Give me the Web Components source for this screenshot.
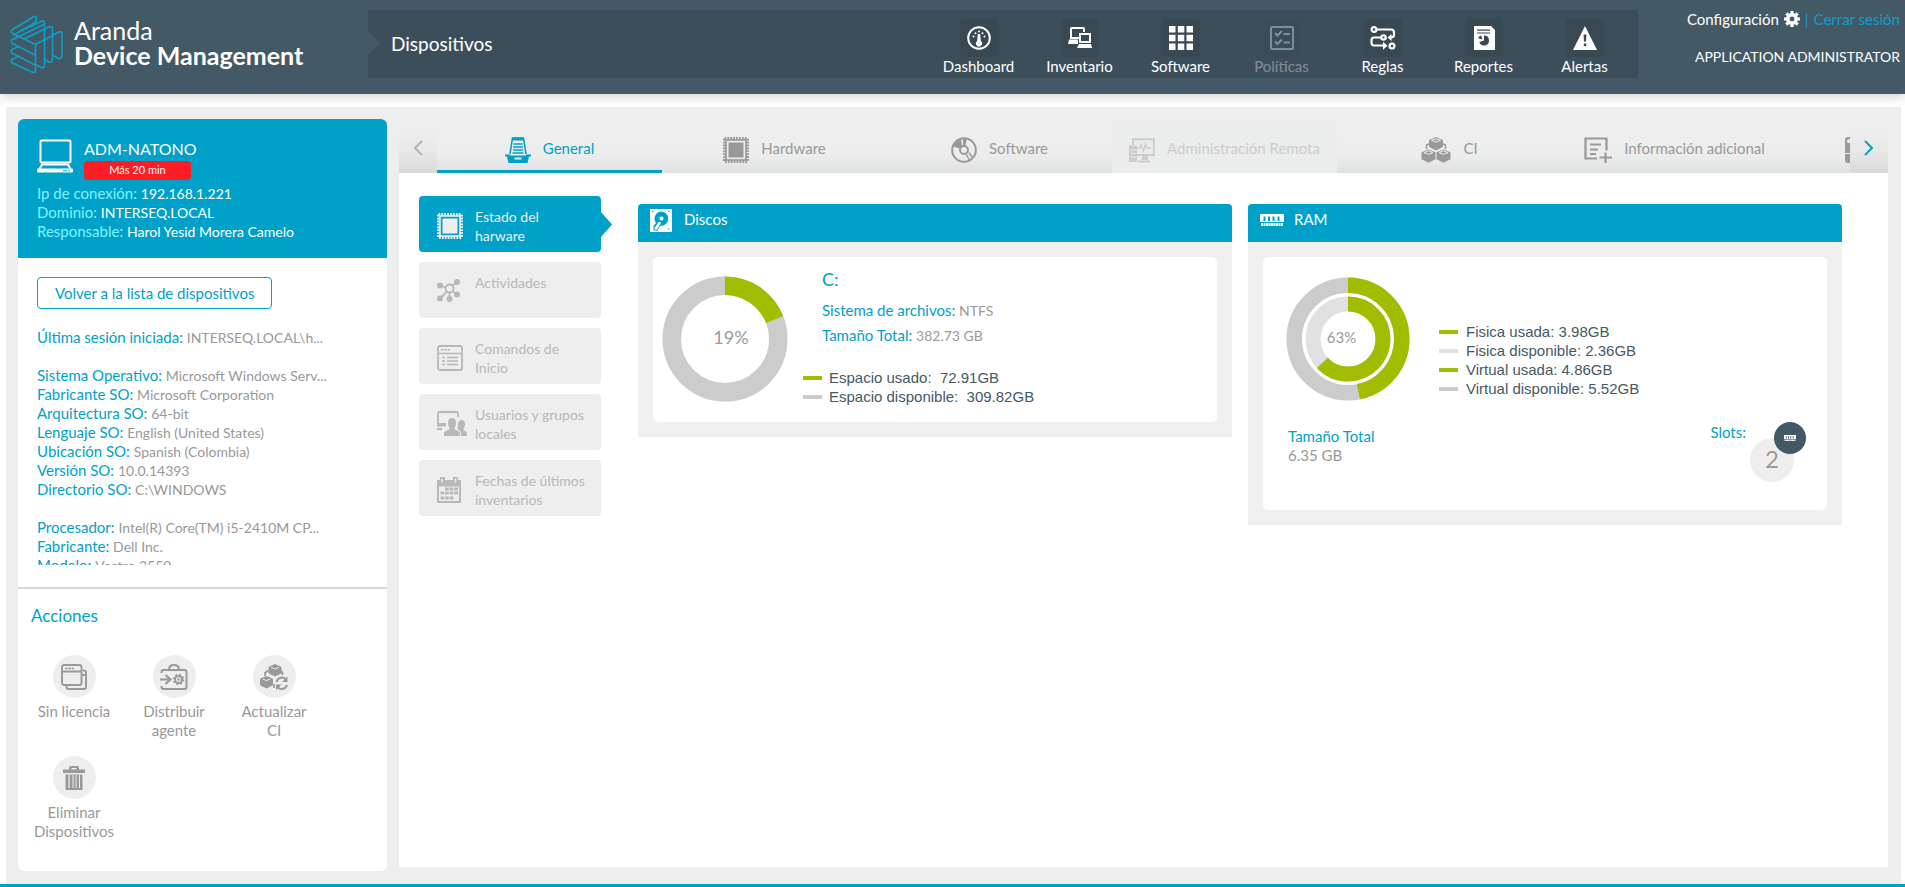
<!DOCTYPE html>
<html lang="es">
<head>
<meta charset="utf-8">
<meta name="viewport" content="width=device-width, initial-scale=1">
<title>Aranda Device Management</title>
<style>
  :root {
    --brand: #00a1c9;
    --slate: #435a66;
    --muted: #999;
    --surface: #eee;
    --line: 19px;
  }
  body { margin: 0; background: #fff; color: var(--muted); font: 15px/19px Lato, "Noto Sans", sans-serif; }
</style>
</head>
<body>
<device-app></device-app>

<script>
const ICONS = {
  logo: [54, 60, `<g fill="none" stroke="#0d9fc8" stroke-width="1.600" stroke-linejoin="round">
    <path d="M2 15 24 1.500Q26.500 .5 26.500 3L26 7 3 20.500"/>
    <path d="M2 15Q0 17 3 18.500L25.500 29.500"/>
    <path d="M9 21 2 24.500Q0 26.500 2.500 28.500L25 40"/>
    <path d="M12 15.500 32 6Q34.500 5.500 34.500 8V50.500Q34 54 31 52.500L26 50"/>
    <path d="M3 24.500 34.500 9M14 24 40 11.500Q42.500 11 42.500 14V44Q42 48 39 47L34.500 44.500"/>
    <path d="M25.500 29.500 49 17Q52 16 52 19V41Q51 44.500 48.500 43.500L42.500 40"/>
    <path d="M9 31 2 34.500Q0 36.500 2.500 38.500L25 50"/>
    <path d="M9 41 2 44.500Q0 46.500 2.500 48L23 57.500Q25.500 58 25.500 55V29.500"/></g>`],
  laptop: [36, 34, `<g fill="none" stroke="currentColor" stroke-width="2"><rect x="3.500" y="1.500" width="30" height="22" rx="1"/><path d="M5 25.500H31L34 31H2Z" stroke-linejoin="round"/></g><rect x="0" y="29.500" width="36" height="4" rx="1" fill="currentColor"/><path d="M26 31.800h4M31 31.800h2" stroke="var(--brand)" stroke-width="1"/>`],
  gauge: [24, 24, `<circle cx="12" cy="12" r="10.800" fill="none" stroke="currentColor" stroke-width="2"/><path d="M10.800 8h2.400l.6 7a3 3 0 1 1-3.600 0z" fill="currentColor"/><g fill="currentColor"><circle cx="6.500" cy="10.500" r="1"/><circle cx="8.500" cy="7.200" r="1"/><circle cx="12" cy="5.500" r="1"/><circle cx="15.500" cy="7.200" r="1"/><circle cx="17.500" cy="10.500" r="1"/></g>`],
  computers: [24, 24, `<g fill="none" stroke="currentColor" stroke-width="2"><path d="M11 12H3V2.500q0-.5.5-.5h12q.5 0 .5.500V6"/><rect x="12" y="8" width="10" height="8"/></g><path d="M1 13.500h9V18H0zM11 18h12l1 4H9z" fill="currentColor"/>`],
  grid: [24, 24, `<path d="M0 0h6.500v6.500H0zM8.800 0h6.500v6.500H8.800zM17.500 0H24v6.500h-6.500zM0 8.800h6.500v6.500H0zM8.800 8.800h6.500v6.500H8.800zM17.500 8.800H24v6.500h-6.500zM0 17.500h6.500V24H0zM8.800 17.500h6.500V24H8.800zM17.500 17.500H24V24h-6.500z" fill="currentColor"/>`],
  checklist: [24, 24, `<g fill="none" stroke="currentColor"><rect x="1" y="1" width="22" height="22" rx="1" stroke-width="2"/><path d="M5 7l2.500 2.500L12 5M5 15.500 7.500 18l4.500-4.500" stroke-width="2.200"/><path d="M13.500 8H20M13.500 16.500H20" stroke-width="1.800"/></g>`],
  rules: [26, 24, `<g fill="none" stroke="currentColor" stroke-width="2.200"><circle cx="4" cy="3.500" r="2.400"/><path d="M6.500 3.500H21q3 0 3 3V9q0 2.500-3 2.500h-2"/><circle cx="13.500" cy="11.500" r="2.200"/><path d="M11 11.500H4q-2.500 0-2.500 3v2q0 3 2.500 3h9"/><circle cx="22" cy="20" r="2.400"/></g><path d="M17.500 11.500l4-3.500v7zM17.500 19.800l-4.500-4v8z" fill="currentColor"/>`],
  report: [22, 24, `<path d="M1 0h17l4 4v20H1z" fill="currentColor"/><path d="M4 4.200h13M4 7h13" stroke="#384954" stroke-width="1.200"/><path d="M11 14.500V9.500a5 5 0 1 1-4.700 6.600z" fill="#384954"/><path d="M9.500 13.500 5 12.200A5 5 0 0 1 8 9.600z" fill="#384954"/>`],
  alert: [24, 24, `<path d="M12 0 24 24H0z" fill="currentColor"/><path d="M10.600 8.500h2.800l-.4 7h-2zM10.800 17.500h2.400V20h-2.400z" fill="#384954"/>`],
  gear: [16, 16, `<circle cx="8" cy="8" r="4.200" fill="none" stroke="currentColor" stroke-width="3.600"/><g stroke="currentColor" stroke-width="3.200"><path d="M8 0v3M8 13v3M0 8h3M13 8h3M2.300 2.300l2 2M11.700 11.700l2 2M2.300 13.700l2-2M11.700 4.300l2-2"/></g>`],
  prev: [10, 16, `<path d="M9 1 2 8l7 7" fill="none" stroke="currentColor" stroke-width="2"/>`],
  next: [10, 16, `<path d="M1 1l7 7-7 7" fill="none" stroke="currentColor" stroke-width="2"/>`],
  tray: [26, 26, `<g fill="none" stroke="currentColor"><path d="M5 17 7.500 1h11L21 17" stroke-width="1.600"/><path d="M8 2h10" stroke-width="3"/><path d="M8.500 7h9M8 10h10M8 13h10M7.500 16h11" stroke-width="1.300"/></g><path d="M0 17.500h5v1h16v-1h5v2h-2l-1.500 6.500h-19L2 19.500H0zM9.500 20.500v2h7v-2z" fill="currentColor" fill-rule="evenodd"/>`],
  chip: [26, 26, `<rect x="1.500" y="1.500" width="23" height="23" fill="none" stroke="currentColor" stroke-width="3" stroke-dasharray="1.800 1.100"/><rect x="3" y="3" width="20" height="20" fill="none" stroke="currentColor" stroke-width="1.600"/><rect x="5.500" y="5.500" width="15" height="15" fill="currentColor"/>`],
  disc: [26, 26, `<g fill="none" stroke="currentColor" stroke-width="2"><circle cx="13" cy="13" r="11.800"/><circle cx="13" cy="13" r="4"/><path d="M15 17l4 7M18 15.500l4 6" stroke-width="1.500"/></g><path d="M2 9.500Q4.500 3.500 10 1.500l1 7.500-2.500 2.500zM12 1h4l-1.500 7.500H12z" fill="currentColor"/>`],
  remote: [26, 26, `<g fill="none" stroke="currentColor"><path d="M4 8V2.200h20.800V18H8" stroke-width="2"/><path d="M7 11h3.500l1.500-3 2.500 6 2-7 1.500 4H22" stroke-width="1.500"/><path d="M9 24.500h12" stroke-width="2"/></g><path d="M0 8.500h8V25H0zM14 18h5v5h-7z" fill="currentColor"/><path d="M1.500 13h5M1.500 16.500h5M1.500 20h5" stroke="#eee" stroke-width="1"/>`],
  cubes: [30, 26, `<g fill="currentColor"><path d="M15 0l7 3v7l-7 3.500L8 10V3zM7.500 12.500l7 2.800v7L7.500 25.800.5 22.300v-7zM22.500 12.500l7 2.800v7l-7 3.500-7-3.500v-7z"/></g><path d="M5.500 12V8l2.500-1M24.500 12V8L22 7" fill="none" stroke="currentColor" stroke-width="1.500"/><g fill="none" stroke="#eee" stroke-width="1"><path d="M10.500 3.300 15 5l4.500-1.700L15 1.700zM3 15.600l4.500 1.700 4.500-1.700-4.500-1.700zM18 15.600l4.500 1.700 4.500-1.700-4.500-1.700z"/></g>`],
  noteplus: [28, 26, `<g fill="none" stroke="currentColor" stroke-width="2.200"><path d="M13 21.500H1.500v-20h21v12M6 7.500h11M6 12.500h8M6 17h6M21.500 15.500v10.500M15.500 20.500H28"/></g>`],
  sheet: [26, 26, `<rect width="26" height="26" rx="3" fill="currentColor"/><path d="M0 16.500h26M2 5q0-2.500 2.500-2.500H8V6L5 7" stroke="#eee" stroke-width="1" fill="none"/><path d="M2.500 3H5v3H2.500z" fill="#eee"/>`],
  network: [24, 23, `<g fill="currentColor"><circle cx="3" cy="6.500" r="3"/><circle cx="20" cy="3" r="3"/><circle cx="20" cy="15.500" r="3"/><circle cx="3" cy="19.500" r="3"/><circle cx="12.500" cy="20" r="3"/></g><g fill="none" stroke="currentColor" stroke-width="1.800"><circle cx="12.500" cy="9.500" r="4"/><path d="M3 6.500l6 2M20 3l-5 4M20 15.500l-4.500-3.500M3 19.500l7-7M12.500 20v-6.500"/></g>`],
  list: [26, 26, `<g fill="none" stroke="currentColor"><rect x="1" y="1" width="24" height="24" rx="2" stroke-width="1.800"/><path d="M1 8.500h24" stroke-width="1.500"/><path d="M4 4.800h9" stroke-width="1.600" stroke-dasharray="2.500 .8"/><path d="M5 12.500h3M10 12.500h11M5 16h3M10 16h11M5 19.500h3M10 19.500h11" stroke-width="1.700"/></g>`],
  users: [30, 26, `<path d="M21 6V3q0-2-2-2H3Q1 1 1 3v11" fill="none" stroke="currentColor" stroke-width="1.800"/><path d="M0 12h9v3.500H0zM0 17h5v2H0zM15 7q4 0 4 5 0 3-1.500 4.500v2q5.500 1.500 5.500 4V25H7v-2.500q0-2.500 5.500-4v-2Q11 15 11 12q0-5 4-5zM24.500 9q3.500 0 3.500 4.500 0 2.500-1.500 4v2q3.500 1 3.500 3V25h-6v-3q0-2-3-3.500 0-1-.5-1.500.8-2 .5-4Q21.500 9 24.500 9z" fill="currentColor"/>`],
  calendar: [24, 26, `<path d="M0 3h3V0h5v3h8V0h5v3h3v23H0zM2 9.500v14.500h20V9.500z" fill="currentColor" fill-rule="evenodd"/><path d="M5 1.500v4M18.500 1.500v4" stroke="#eee" stroke-width="1.400"/><path d="M8 12h13M3.500 16h17.500M3.500 21h13" stroke="currentColor" stroke-width="3" stroke-dasharray="3.700 .9"/>`],
  disk: [22, 23, `<rect width="22" height="23" fill="#fff"/><path d="M11 2.500a7.200 7.200 0 1 1 0 14.400h-1L7 22l-3.500-1V17l2.500-3A7.200 7.200 0 0 1 11 2.500z" fill="var(--brand)"/><circle cx="11.500" cy="9.500" r="2" fill="#fff"/><path d="M9.500 14 5.800 19.500" stroke="#fff" stroke-width="2.600" stroke-linecap="round"/><path d="M18 20h1.500M18 2.500h1.500M2 2.500h1.500" stroke="var(--brand)"/>`],
  ram: [24, 13, `<path d="M0 0h24v8H0zM3.500 2.500V7h2V2.500zM8 2.500V7h2V2.500zM12.500 2.500V7h2V2.500zM17.500 2.500V7h2V2.500z" fill="currentColor" fill-rule="evenodd"/><path d="M1 10.500h22" stroke="currentColor" stroke-width="3" stroke-dasharray="2 .5"/>`],
  windows: [26, 26, `<g fill="none" stroke="currentColor" stroke-width="1.900"><rect x="1" y="1" width="19.500" height="20" rx="2"/><path d="M1 7.500h19.500M22 6.500h1q2 0 2 2V23q0 2-2 2H7.500q-2 0-2-2v-1M21 11h4"/><path d="M4 4.500h9" stroke-dasharray="2.500 .8" stroke-width="1.600"/></g>`],
  deploy: [28, 26, `<g fill="none" stroke="currentColor" stroke-width="2"><path d="M1.500 9V8q0-2 2-2h21q2 0 2 2v15q0 2-2 2h-21q-2 0-2-2v-1M9 5.500q0-4.500 5-4.500t5 4.500"/><path d="M0 15.500h10M5.500 11l5 4.500-5 4.500" stroke-width="2.200"/><circle cx="18.500" cy="15.500" r="3.500"/><circle cx="18.500" cy="15.500" r="4.800" stroke-dasharray="1.900 1.870" stroke-width="1.800"/></g><circle cx="18.500" cy="15.500" r="1.200" fill="currentColor"/>`],
  cubesync: [28, 26, `<g fill="currentColor"><path d="M15 0l6.500 3v6.500L15 12.500 8.500 9.500V3zM6.500 12l6.500 2.800v6.500L6.500 24.500 0 21.300v-6.500z"/></g><path d="M5 12V9l3-2.500M22.500 11V9L21 6.500M14 20v4" fill="none" stroke="currentColor" stroke-width="1.700"/><g fill="none" stroke="#eee"><path d="M11 3.300 15 5l4-1.700M3 15.100l3.500 1.500 3.500-1.500"/></g><g fill="none" stroke="currentColor" stroke-width="2"><path d="M16.500 18a5.500 5.500 0 0 1 9.500-2.500M27 21a5.500 5.500 0 0 1-9.500 2"/></g><path d="M27.500 12.500V18H22zM16 26v-5.500h5.500z" fill="currentColor"/>`],
  trash: [22, 24, `<path d="M6 3.500V2q0-2 2-2h6q2 0 2 2v1.500h6V7H0V3.500zM8.500 3.500h5V2h-5zM2.500 8.500h17V24h-17zM5.500 9v13h1.200V9zM9.500 9v13h1V9zM12.500 9v13h1V9zM16 9v13h1V9z" fill="currentColor" fill-rule="evenodd"/>`]
};

/* Registers a custom element whose shadow root is filled by render(element). */
function component(name, css, render) {
  customElements.define(name, class extends HTMLElement {
    constructor() {
      super();
      this.attachShadow({ mode: 'open' });
    }
    connectedCallback() {
      const t = document.createElement('template');
      t.innerHTML = `<style>*{box-sizing:border-box}${css}</style>${render(this)}`;
      this.shadowRoot.replaceChildren(t.content.cloneNode(true));
    }
  });
}

component('app-icon', `:host{display:inline-flex;flex:none}svg{display:block}`, el => {
  const [w, h, body] = ICONS[el.getAttribute('name')];
  const k = Number(el.getAttribute('scale') || 1);
  return `<svg width="${w * k}" height="${h * k}" viewBox="0 0 ${w} ${h}" aria-hidden="true">${body}</svg>`;
});

component('nav-item', `
  :host{display:block;width:101px}
  a{display:flex;flex-direction:column;align-items:center;color:#fff;text-decoration:none;line-height:19px}
  :host([disabled]) a{opacity:.35}
  .tile{display:flex;align-items:center;justify-content:center;width:38px;height:38px;border-radius:4px;background:#384954}
`, el => `<a href="#"><span class="tile"><app-icon name="${el.getAttribute('icon')}"></app-icon></span><slot></slot></a>`);

component('app-header', `
  :host{position:relative;display:flex;height:94px;background:var(--slate);color:#fff;box-shadow:0 2px 12px rgba(0,0,0,.2)}
  .brand{display:flex;gap:10px;width:368px;padding:15px 0 0 10px}
  .name{font:25px/25px Lato,sans-serif;padding-top:3px}
  .name b{display:block}
  .band{flex:1;display:flex;justify-content:space-between;height:68px;margin-top:10px;padding-right:3px;background:#3d4e5b}
  .where{display:flex;align-items:center;padding-bottom:2px;font-size:19px}
  .where::before{content:"";width:12px;height:24px;margin-right:11px;background:var(--slate);clip-path:polygon(0 0,100% 50%,0 100%)}
  nav{display:flex;padding-top:9px}
  .user{width:267px;padding:9px 5px 0 0;text-align:right}
  .links{display:flex;justify-content:flex-end;align-items:center;gap:5px;height:20px}
  a{color:#fff;text-decoration:none}
  .out,.bar{color:#109ac4}
  .who{margin-top:18px;font-size:14px}
`, () => `
  <div class="brand"><app-icon name="logo"></app-icon><div class="name">Aranda<b>Device Management</b></div></div>
  <div class="band">
    <div class="where">Dispositivos</div>
    <nav>
      <nav-item icon="gauge">Dashboard</nav-item><nav-item icon="computers">Inventario</nav-item>
      <nav-item icon="grid">Software</nav-item><nav-item icon="checklist" disabled>Políticas</nav-item>
      <nav-item icon="rules">Reglas</nav-item><nav-item icon="report">Reportes</nav-item><nav-item icon="alert">Alertas</nav-item>
    </nav>
  </div>
  <div class="user">
    <div class="links"><a href="#">Configuración</a><app-icon name="gear"></app-icon><span class="bar">|</span><a class="out" href="#">Cerrar sesión</a></div>
    <div class="who">APPLICATION ADMINISTRATOR</div>
  </div>`);

component('info-line', `
  :host{display:block;white-space:nowrap;line-height:var(--line)}
  .label{color:var(--label,var(--brand))}
  .value{font-size:14px}
`, el => `<span class="label">${el.getAttribute('label')}</span> <span class="value"><slot></slot></span>`);

component('action-button', `
  :host{display:block;width:100px}
  button{display:flex;flex-direction:column;align-items:center;gap:4px;width:100%;padding:0 6px;border:0;background:none;color:inherit;font:inherit}
  .disc{display:flex;align-items:center;justify-content:center;width:43px;height:43px;border-radius:50%;background:var(--surface)}
`, el => `<button type="button"><span class="disc"><app-icon name="${el.getAttribute('icon')}"></app-icon></span><slot></slot></button>`);

component('device-panel', `
  :host{display:flex;flex-direction:column;border-radius:6px;overflow:hidden;background:#fff}
  header{height:139px;padding:18px 19px 0;background:var(--brand);color:#fff;--label:#7ff2ff}
  .top{display:flex;gap:11px;margin-bottom:4px}
  .top app-icon{padding-top:2px}
  h1{margin:0;font-size:16px;line-height:24px;font-weight:400}
  .late{width:107px;height:19px;border-radius:4px;background:#ff1d25;font-size:11px;line-height:18px;text-align:center}
  .back{align-self:flex-start;height:32px;margin:19px 19px 0;padding:0 17px;border:1px solid var(--brand);border-radius:4px;background:#fff;color:var(--brand);font:inherit}
  .details{height:237px;margin:19px 19px 22px;overflow:hidden}
  .details div{margin-bottom:19px}
  .actions{flex:1;padding:17px 6px 18px;border-top:2px solid #d9d9d9}
  h2{margin:0 0 29px 7px;font-size:17px;line-height:20px;font-weight:400;color:var(--brand)}
  .grid{display:flex;flex-wrap:wrap;row-gap:16px}
`, () => `
  <header>
    <div class="top"><app-icon name="laptop"></app-icon><div><h1>ADM-NATONO</h1><div class="late">Más 20 min</div></div></div>
    <info-line label="Ip de conexión:">192.168.1.221</info-line>
    <info-line label="Dominio:">INTERSEQ.LOCAL</info-line>
    <info-line label="Responsable:">Harol Yesid Morera Camelo</info-line>
  </header>
  <button class="back" type="button">Volver a la lista de dispositivos</button>
  <section class="details">
    <div><info-line label="Última sesión iniciada:">INTERSEQ.LOCAL\\h...</info-line></div>
    <div>
      <info-line label="Sistema Operativo:">Microsoft Windows Serv...</info-line>
      <info-line label="Fabricante SO:">Microsoft Corporation</info-line>
      <info-line label="Arquitectura SO:">64-bit</info-line>
      <info-line label="Lenguaje SO:">English (United States)</info-line>
      <info-line label="Ubicación SO:">Spanish (Colombia)</info-line>
      <info-line label="Versión SO:">10.0.14393</info-line>
      <info-line label="Directorio SO:">C:\\WINDOWS</info-line>
    </div>
    <div>
      <info-line label="Procesador:">Intel(R) Core(TM) i5-2410M CP...</info-line>
      <info-line label="Fabricante:">Dell Inc.</info-line>
      <info-line label="Modelo:">Vostro 3550</info-line>
    </div>
  </section>
  <section class="actions">
    <h2>Acciones</h2>
    <div class="grid">
      <action-button icon="windows">Sin licencia</action-button>
      <action-button icon="deploy">Distribuir agente</action-button>
      <action-button icon="cubesync">Actualizar<br>CI</action-button>
      <action-button icon="trash">Eliminar Dispositivos</action-button>
    </div>
  </section>`);

component('tab-item', `
  :host{flex:none;display:block;width:225px;background:linear-gradient(#eee 40%,#ebecec 70%,#dfe0e2)}
  button{display:flex;align-items:center;justify-content:center;gap:12px;width:100%;height:54px;padding:8px 0 0;border:0;border-bottom:3px solid transparent;background:none;color:inherit;font:inherit;white-space:nowrap}
  app-icon{padding-top:3px}
  :host([active]) button{color:var(--brand);border-color:var(--brand)}
  :host([disabled]){background:#ebecec}
  :host([disabled]) button{color:#ccc}
  :host([compact]) button{justify-content:flex-start;padding-left:58px}
`, el => `<button type="button" role="tab"><app-icon name="${el.getAttribute('icon')}"></app-icon><slot></slot></button>`);

component('tab-bar', `
  :host{display:flex;height:54px}
  .arrow{flex:none;width:38px;padding:6px 0 0;border:0;background:linear-gradient(#eee 20%,#e8e8e8 60%,#d9d9d9);color:#b3b3b3}
  .arrow:last-child{color:var(--brand)}
  .tabs{flex:1;display:flex;min-width:0;overflow:hidden}
`, () => `<button class="arrow" type="button" aria-label="Anterior"><app-icon name="prev"></app-icon></button>
  <div class="tabs" role="tablist"><slot></slot></div>
  <button class="arrow" type="button" aria-label="Siguiente"><app-icon name="next"></app-icon></button>`);

component('side-item', `
  :host{position:relative;display:block}
  button{display:flex;gap:12px;width:100%;height:56px;padding:11px 14px 0 18px;border:0;border-radius:4px;background:var(--surface);color:#b8b8b8;font:14px/19px Lato,sans-serif;text-align:left}
  .pic{flex:none;width:26px;padding-top:6px}
  :host([active]) button{background:var(--brand);color:#eee}
  :host([active])::after{content:"";position:absolute;left:100%;top:16px;width:11px;height:25px;background:var(--brand);clip-path:polygon(0 0,100% 50%,0 100%)}
`, el => `<button type="button"><span class="pic"><app-icon name="${el.getAttribute('icon')}"></app-icon></span><span><slot></slot></span></button>`);

component('info-card', `
  :host{display:block;background:#f0f0f0;border-radius:4px 4px 0 0;overflow:hidden;padding-bottom:15px}
  header{display:flex;align-items:center;height:38px;padding:0 12px 8px;background:var(--brand);color:#fff}
  app-icon{width:34px;padding-top:3px}
  h2{margin:0;font-size:15px;font-weight:400}
  .body{margin:15px 15px 0;border-radius:5px;background:#fff}
`, el => `<header><app-icon name="${el.getAttribute('icon')}"></app-icon><h2>${el.getAttribute('heading')}</h2></header><div class="body"><slot></slot></div>`);

/* rings="outerRadius,thickness,percent,restColour;..." */
component('ring-chart', `
  :host{display:grid;flex:none;width:126px;height:126px;place-items:center}
  svg,span{grid-area:1/1}
  span{padding:var(--pad,0);font-size:var(--pct,18px)}
`, el => {
  const rings = el.getAttribute('rings').split(';').map(r => {
    const [ro, th, pct, rest] = r.split(',');
    const rad = ro - th / 2, len = 2 * Math.PI * rad, used = len * pct / 100;
    return `<circle cx="63" cy="63" r="${rad}" stroke="${rest}"/><circle cx="63" cy="63" r="${rad}" stroke="#a2bd00" stroke-dasharray="${used} ${len}" transform="rotate(-90 63 63)"/>`
      .replaceAll('<circle', `<circle fill="none" stroke-width="${th}"`);
  }).join('');
  return `<svg width="126" height="126" viewBox="0 0 126 126">${rings}</svg><span><slot></slot></span>`;
});

component('legend-row', `
  :host{display:flex;align-items:center;height:19px;color:var(--slate);font:15px/19px "Liberation Sans",Arial,sans-serif;white-space:pre}
  i{width:19px;height:4px;margin-right:var(--gap,7px);background:var(--c)}
`, el => `<i style="--c:${el.getAttribute('color')}"></i><slot></slot>`);

component('disk-view', `
  :host{display:flex;gap:15px;height:165px;padding:11px 9px 0}
  ring-chart{margin-top:8px;--pad:0 0 3px 12px}
  .facts{--line:24px;margin:0 0 20px 19px}
  .drive{margin-bottom:8px;font-size:18px;line-height:22px;color:var(--brand)}
`, () => `
  <ring-chart rings="62.5,18.5,19,#ccc">19%</ring-chart>
  <div>
    <div class="facts"><div class="drive">C:</div><info-line label="Sistema de archivos:">NTFS</info-line><info-line label="Tamaño Total:">382.73 GB</info-line></div>
    <legend-row color="#a2bd00">Espacio usado:  72.91GB</legend-row>
    <legend-row color="#ccc">Espacio disponible:  309.82GB</legend-row>
  </div>`);

component('ram-view', `
  :host{display:block;height:253px;padding:19px 20px 0 22px}
  .row{display:flex}
  ring-chart{--pct:15px;--pad:0 13px 3px 0}
  .legend{--gap:8px;margin:46px 0 0 28px}
  .foot{display:flex;justify-content:space-between;padding:25px 0 0 3px}
  .total span{display:block;color:var(--brand)}
  .slots{display:flex;gap:4px;margin-top:-5px;color:var(--brand)}
  .slots>span{padding-top:1px}
  .count{position:relative;width:57px;height:60px;padding-top:16px}
  .big{width:44px;height:44px;border-radius:50%;background:var(--surface);color:var(--muted);font-size:24px;line-height:42px;text-align:center}
  .badge{position:absolute;left:24px;top:0;display:flex;align-items:center;justify-content:center;width:32px;height:32px;border-radius:50%;background:var(--slate);color:#fff}
`, () => `
  <div class="row">
    <ring-chart rings="61.5,15.5,46.8,#ccc;42.5,15,63,#e1e1e1">63%</ring-chart>
    <div class="legend">
      <legend-row color="#a2bd00">Fisica usada: 3.98GB</legend-row>
      <legend-row color="#e1e1e1">Fisica disponible: 2.36GB</legend-row>
      <legend-row color="#a2bd00">Virtual usada: 4.86GB</legend-row>
      <legend-row color="#ccc">Virtual disponible: 5.52GB</legend-row>
    </div>
  </div>
  <div class="foot">
    <div class="total"><span>Tamaño Total</span>6.35 GB</div>
    <div class="slots"><span>Slots:</span><div class="count"><div class="big">2</div><div class="badge"><app-icon name="ram" scale=".5"></app-icon></div></div></div>
  </div>`);

component('device-detail', `
  :host{display:block;min-width:0;background:#fff}
  .content{display:grid;grid-template-columns:182px 1fr;gap:37px;padding:23px 46px 23px 20px}
  .side{display:grid;gap:10px;align-content:start}
  .cards{display:grid;grid-template-columns:1fr 1fr;gap:16px;align-items:start;padding-top:8px}
`, () => `
  <tab-bar>
    <tab-item icon="tray" active>General</tab-item><tab-item icon="chip">Hardware</tab-item>
    <tab-item icon="disc">Software</tab-item><tab-item icon="remote" disabled>Administración Remota</tab-item>
    <tab-item icon="cubes">CI</tab-item><tab-item icon="noteplus">Información adicional</tab-item>
    <tab-item icon="sheet" compact></tab-item>
  </tab-bar>
  <div class="content">
    <div class="side">
      <side-item icon="chip" active>Estado del<br>harware</side-item>
      <side-item icon="network">Actividades</side-item>
      <side-item icon="list">Comandos de<br>Inicio</side-item>
      <side-item icon="users">Usuarios y grupos locales</side-item>
      <side-item icon="calendar">Fechas de últimos inventarios</side-item>
    </div>
    <div class="cards">
      <info-card icon="disk" heading="Discos"><disk-view></disk-view></info-card>
      <info-card icon="ram" heading="RAM"><ram-view></ram-view></info-card>
    </div>
  </div>`);

component('device-app', `
  :host{display:flex;flex-direction:column;min-height:100vh}
  main{flex:1;display:grid;grid-template-columns:369px 1fr;gap:12px;margin:13px 4px 0 6px;padding:12px 13px 13px 12px;background:var(--surface)}
  device-detail{margin-bottom:4px}
  .base{height:3px;background:var(--brand)}
`, () => `<app-header></app-header><main><device-panel></device-panel><device-detail></device-detail></main><div class="base"></div>`);
</script>
</body>
</html>
